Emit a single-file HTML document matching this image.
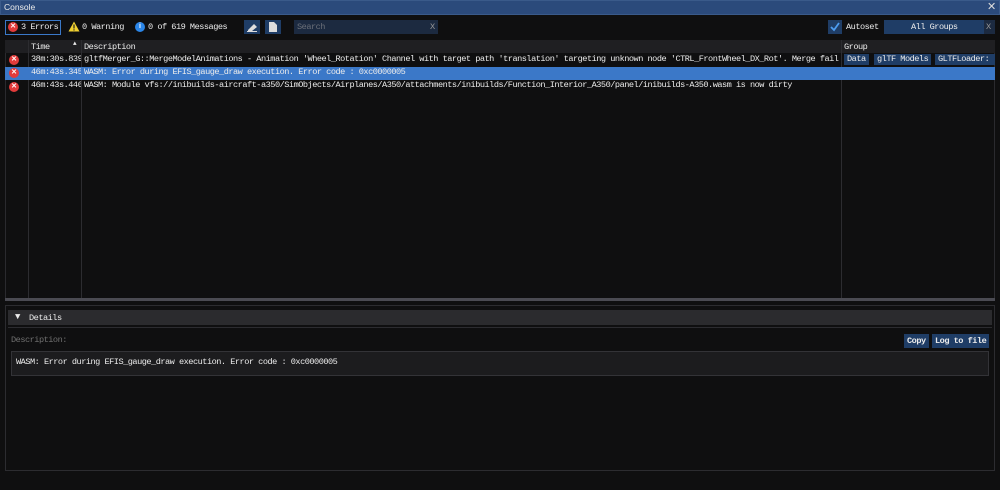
<!DOCTYPE html>
<html><head><style>
*{margin:0;padding:0;box-sizing:border-box}
body{width:1000px;height:490px;background:#0f0f10;font-family:"Liberation Mono",monospace;font-size:8.6px;letter-spacing:-0.5px;color:#ececec;position:relative;overflow:hidden}
.a{position:absolute;white-space:nowrap}
.title{left:0;top:0;width:1000px;height:15px;background:#2b4a7b;border:1px solid #3a5a8a;}
.ic{width:10px;height:10px;border-radius:50%;background:#e23b3b;color:#fff;font-size:7px;line-height:10px;text-align:center;font-family:"Liberation Sans",sans-serif;font-weight:bold;letter-spacing:0}
.row{left:5px;width:990px;height:13px;line-height:13px}
.chip{background:#1f3d66;padding:0 3px;height:11px;line-height:11px;top:54px}
.btn{background:#1f3d66;height:14px;line-height:14px;padding:0 3px;top:334px;font-weight:bold}
</style></head><body>
<div class="a title"></div>
<div class="a" style="left:4px;top:2px;font-family:'Liberation Sans',sans-serif;font-size:8.5px;line-height:10px;letter-spacing:0">Console</div>
<div class="a" style="left:987px;top:1px;font-size:11px;line-height:12px;color:#ddd;font-family:'Liberation Sans',sans-serif">✕</div>

<div class="a" style="left:5px;top:20px;width:56px;height:15px;border:1px solid #3a78c8"></div>
<div class="a ic" style="left:8px;top:22px">✕</div>
<div class="a" style="left:21px;top:22px">3 Errors</div>
<svg class="a" style="left:68px;top:21px" width="12" height="11"><path d="M6 0.5L11.5 10.5H0.5Z" fill="#f0d030"/><rect x="5.4" y="3.5" width="1.2" height="4" fill="#222"/><rect x="5.4" y="8.3" width="1.2" height="1.2" fill="#222"/></svg>
<div class="a" style="left:82px;top:22px">0 Warning</div>
<div class="a ic" style="left:135px;top:22px;background:#2b86e8">i</div>
<div class="a" style="left:148px;top:22px">0 of 619 Messages</div>
<div class="a" style="left:244px;top:20px;width:16px;height:14px;background:#1f3d66"></div>
<svg class="a" style="left:246px;top:22px" width="12" height="10"><path d="M2 8L8 2L11 5L6 9H2Z" fill="#ddd"/><path d="M1 9.5H11" stroke="#ddd"/></svg>
<div class="a" style="left:265px;top:20px;width:16px;height:14px;background:#1f3d66"></div>
<svg class="a" style="left:268px;top:21px" width="10" height="12"><path d="M1 1H6L9 4V11H1Z" fill="#ddd"/></svg>
<div class="a" style="left:294px;top:20px;width:144px;height:14px;background:#1c2a40"></div>
<div class="a" style="left:297px;top:22px;color:#6a6f78">Search</div>
<div class="a" style="left:430px;top:22px;color:#999">X</div>

<div class="a" style="left:828px;top:20px;width:14px;height:14px;background:#1f3d66"></div>
<svg class="a" style="left:829px;top:21px" width="12" height="12"><path d="M2 6L5 9L10 2" stroke="#4d9cf0" stroke-width="1.8" fill="none"/></svg>
<div class="a" style="left:846px;top:22px">Autoset</div>
<div class="a" style="left:884px;top:20px;width:100px;height:14px;background:#1f3d66"></div>
<div class="a" style="left:911px;top:22px">All Groups</div>
<div class="a" style="left:984px;top:20px;width:11px;height:14px;background:#1c2a40"></div>
<div class="a" style="left:986px;top:22px;color:#999">X</div>

<div class="a" style="left:5px;top:40px;width:990px;height:260px;border:1px solid #2a2a2e"></div>
<div class="a" style="left:5px;top:40px;width:990px;height:13px;background:#1f1f22"></div>
<div class="a" style="left:28px;top:40px;width:1px;height:258px;background:#2c2c30"></div>
<div class="a" style="left:81px;top:40px;width:1px;height:258px;background:#2c2c30"></div>
<div class="a" style="left:841px;top:40px;width:1px;height:258px;background:#2c2c30"></div>
<div class="a" style="left:31px;top:42px">Time</div>
<div class="a" style="left:73px;top:40px;font-size:6px">▲</div>
<div class="a" style="left:84px;top:42px">Description</div>
<div class="a" style="left:844px;top:42px">Group</div>

<div class="a ic" style="left:9px;top:55px">✕</div>
<div class="a" style="left:31px;top:54px;width:50px;overflow:hidden;line-height:11px">38m:30s.839</div>
<div class="a" style="left:84px;top:54px;line-height:11px">gltfMerger_G::MergeModelAnimations - Animation 'Wheel_Rotation' Channel with target path 'translation' targeting unknown node 'CTRL_FrontWheel_DX_Rot'. Merge fail</div>
<div class="a chip" style="left:844px">Data</div>
<div class="a chip" style="left:874px">glTF Models</div>
<div class="a chip" style="left:935px;width:60px;overflow:hidden">GLTFLoader:</div>

<div class="a row" style="top:67px;background:#3b78c8"></div>
<div class="a ic" style="left:9px;top:68px">✕</div>
<div class="a" style="left:31px;top:67px;width:50px;overflow:hidden;line-height:11px">46m:43s.345</div>
<div class="a" style="left:84px;top:67px;line-height:11px">WASM: Error during EFIS_gauge_draw execution. Error code : 0xc0000005</div>

<div class="a ic" style="left:9px;top:82px">✕</div>
<div class="a" style="left:31px;top:80px;width:50px;overflow:hidden;line-height:11px">46m:43s.446</div>
<div class="a" style="left:84px;top:80px;line-height:11px">WASM: Module vfs://inibuilds-aircraft-a350/SimObjects/Airplanes/A350/attachments/inibuilds/Function_Interior_A350/panel/inibuilds-A350.wasm is now dirty</div>

<div class="a" style="left:5px;top:298px;width:990px;height:3px;background:#4a4a52"></div>

<div class="a" style="left:5px;top:305px;width:990px;height:166px;border:1px solid #2c2c30"></div>
<div class="a" style="left:8px;top:310px;width:984px;height:15px;background:#2b2b2e"></div>
<div class="a" style="left:15px;top:312px;font-size:9px">▼</div>
<div class="a" style="left:29px;top:313px">Details</div>
<div class="a" style="left:8px;top:327px;width:984px;height:1px;background:#2c2c30"></div>
<div class="a" style="left:11px;top:335px;color:#707070">Description:</div>
<div class="a btn" style="left:904px">Copy</div>
<div class="a btn" style="left:932px">Log to file</div>
<div class="a" style="left:11px;top:351px;width:978px;height:25px;background:#1c1c1e;border:1px solid #333337"></div>
<div class="a" style="left:16px;top:357px">WASM: Error during EFIS_gauge_draw execution. Error code : 0xc0000005</div>
</body></html>
